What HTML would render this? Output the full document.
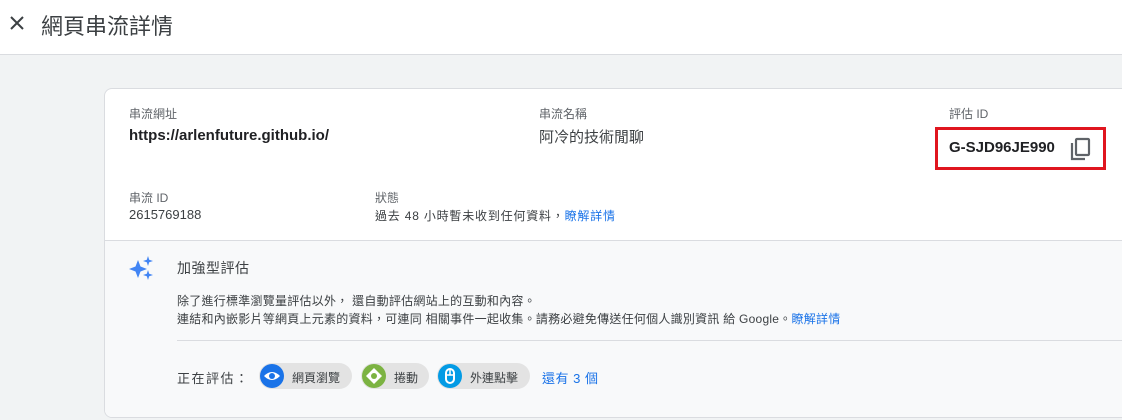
<!DOCTYPE html>
<html><head><meta charset="utf-8"><style>
*{margin:0;padding:0;box-sizing:border-box}
body{width:1122px;height:420px;overflow:hidden;background:#f1f3f4;font-family:"Liberation Sans","Noto Sans CJK TC",sans-serif;color:#202124;position:relative}
.hdr{position:absolute;left:0;top:0;width:1122px;height:55px;background:#fff;border-bottom:1px solid #dadce0}
.abs{position:absolute;white-space:nowrap}
.card{position:absolute;left:104px;top:88px;width:1030px;height:330px;background:#fff;border:1px solid #dadce0;border-radius:8px;overflow:hidden}
.low{position:absolute;left:0;top:151px;width:100%;height:200px;background:#f8f9fa;border-top:1px solid #dadce0}
.lbl{font-size:12px;color:#5f6368}
.chip{position:absolute;top:363px;height:26px;border-radius:13px;background:#e3e3e3;font-size:12px;color:#3c4043}
.ci{position:absolute;left:1px;top:1px;width:24px;height:24px;border-radius:12px}
a{color:#1a73e8;text-decoration:none}
</style></head><body>
<div class="hdr"></div>
<svg class="abs" style="left:9px;top:15px" width="16" height="16" viewBox="0 0 16 16"><path d="M2 2L14 14M14 2L2 14" stroke="#3c4043" stroke-width="2"/></svg>
<div class="abs" style="left:41px;top:9px;font-size:22px;color:#3c4043">網頁串流詳情</div>
<div class="card"><div class="low"></div></div>
<div class="abs lbl" style="left:129px;top:105px">串流網址</div>
<div class="abs" style="left:129px;top:127px;font-size:15px;font-weight:bold;color:#202124">https://arlenfuture.github.io/</div>
<div class="abs lbl" style="left:539px;top:105px">串流名稱</div>
<div class="abs" style="left:539px;top:126px;font-size:15px;color:#3c4043">阿冷的技術閒聊</div>
<div class="abs lbl" style="left:949px;top:105px">評估 ID</div>
<div class="abs" style="left:935px;top:127px;width:171px;height:43px;border:3px solid #e0161f"></div>
<div class="abs" style="left:949px;top:139px;font-size:15px;font-weight:bold;color:#202124">G-SJD96JE990</div>
<svg class="abs" style="left:1070px;top:137px" width="22" height="24" viewBox="0 0 22 24"><path d="M2 6V22H15" stroke="#5f6368" stroke-width="2.2" fill="none"/><rect x="6" y="2" width="13" height="16" rx="1" stroke="#5f6368" stroke-width="2.2" fill="none"/></svg>
<div class="abs lbl" style="left:129px;top:189px">串流 ID</div>
<div class="abs" style="left:129px;top:207px;font-size:13px;color:#3c4043">2615769188</div>
<div class="abs lbl" style="left:375px;top:189px">狀態</div>
<div class="abs" style="left:375px;top:207px;font-size:12px;color:#3c4043;letter-spacing:0.8px">過去 48 小時暫未收到任何資料，<a>瞭解詳情</a></div>
<svg class="abs" style="left:128px;top:256px" width="26" height="24" viewBox="0 0 26 24"><path d="M10 4L12.5 10.5L19 13L12.5 15.5L10 22L7.5 15.5L1 13L7.5 10.5Z" fill="#4285f4"/><path d="M20 0L21.2 3.8L25 5L21.2 6.2L20 10L18.8 6.2L15 5L18.8 3.8Z" fill="#4285f4"/><path d="M20 14L21.2 17.8L25 19L21.2 20.2L20 24L18.8 20.2L15 19L18.8 17.8Z" fill="#4285f4"/></svg>
<div class="abs" style="left:177px;top:258px;font-size:14px;color:#3c4043;letter-spacing:0.5px">加強型評估</div>
<div class="abs" style="left:177px;top:292px;font-size:12px;color:#3c4043;line-height:18px;letter-spacing:0.25px">除了進行標準瀏覽量評估以外， 還自動評估網站上的互動和內容。<br>連結和內嵌影片等網頁上元素的資料，可連同 相關事件一起收集。請務必避免傳送任何個人識別資訊 給 Google。<a>瞭解詳情</a></div>
<div class="abs" style="left:177px;top:340px;width:945px;height:1px;background:#dadce0"></div>
<div class="abs" style="left:177px;top:368px;font-size:13px;color:#3c4043;letter-spacing:1.5px">正在評估：</div>
<div class="chip" style="left:259px;width:93px"><div class="ci" style="background:#1a73e8"><svg width="24" height="24" viewBox="0 0 24 24"><path d="M4 12Q12 4 20 12Q12 20 4 12Z" fill="#fff"/><circle cx="12" cy="12" r="3" fill="#1a73e8"/></svg></div><span class="abs" style="left:33px;top:6px">網頁瀏覽</span></div>
<div class="chip" style="left:361px;width:68px"><div class="ci" style="background:#7cb342"><svg width="24" height="24" viewBox="0 0 24 24"><path d="M12 4L20 12L12 20L4 12Z" fill="#fff"/><circle cx="12" cy="12" r="3" fill="#7cb342"/></svg></div><span class="abs" style="left:33px;top:6px">捲動</span></div>
<div class="chip" style="left:437px;width:93px"><div class="ci" style="background:#039be5"><svg width="24" height="24" viewBox="0 0 24 24"><rect x="8" y="5" width="8" height="14" rx="4" stroke="#fff" stroke-width="2" fill="none"/><path d="M12 6V11M8 11H16" stroke="#fff" stroke-width="1.5"/></svg></div><span class="abs" style="left:33px;top:6px">外連點擊</span></div>
<div class="abs" style="left:542px;top:368px;font-size:13px;color:#1a73e8;letter-spacing:0.5px">還有 3 個</div>
</body></html>
